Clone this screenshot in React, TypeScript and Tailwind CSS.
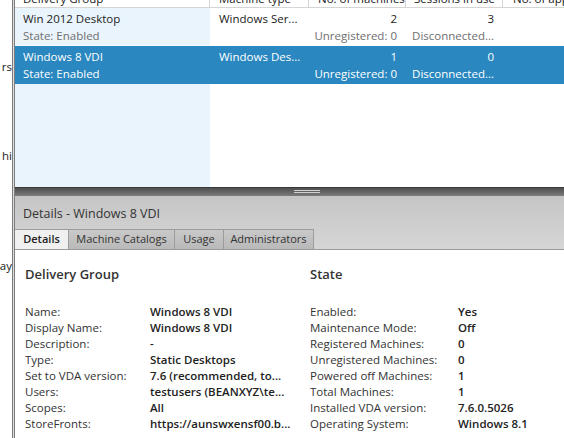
const rows = [
  {
    name: "Win 2012 Desktop",
    state: "State: Enabled",
    type: "Windows Ser...",
    machines: "2",
    unreg: "Unregistered: 0",
    sessions: "3",
    disc: "Disconnected...",
    selected: false,
  },
  {
    name: "Windows 8 VDI",
    state: "State: Enabled",
    type: "Windows Des...",
    machines: "1",
    unreg: "Unregistered: 0",
    sessions: "0",
    disc: "Disconnected...",
    selected: true,
  },
];

const groupInfo = [
  ["Name:", "Windows 8 VDI"],
  ["Display Name:", "Windows 8 VDI"],
  ["Description:", "-"],
  ["Type:", "Static Desktops"],
  ["Set to VDA version:", "7.6 (recommended, to..."],
  ["Users:", "testusers (BEANXYZ\\te..."],
  ["Scopes:", "All"],
  ["StoreFronts:", "https://aunswxensf00.b..."],
];

const stateInfo = [
  ["Enabled:", "Yes"],
  ["Maintenance Mode:", "Off"],
  ["Registered Machines:", "0"],
  ["Unregistered Machines:", "0"],
  ["Powered off Machines:", "1"],
  ["Total Machines:", "1"],
  ["Installed VDA version:", "7.6.0.5026"],
  ["Operating System:", "Windows 8.1"],
];

const tabs = ["Details", "Machine Catalogs", "Usage", "Administrators"];
const tabWidths = ["w-[54px]", "w-[106px]", "w-[49px]", "w-[90px]"];

export default function App() {
  return (
    <div
      className="w-[564px] h-[438px] flex overflow-hidden bg-white text-[11.5px] text-[#333]"
      style={{ fontFamily: '"Segoe UI", "Open Sans", "Noto Sans", sans-serif' }}
    >
      {/* edge of the navigation tree on the left */}
      <div className="w-[12px] flex flex-col items-end text-[#222] leading-[17px]">
        <span className="mt-[58px]">rs</span>
        <span className="mt-[72px]">hi</span>
        <span className="mt-[93px]">ay</span>
      </div>
      <div className="w-[3px] border-l border-[#7d7d7d] bg-[#dcdcdc] border-r" />

      <div className="flex-1 flex flex-col min-w-0">
        {/* grid */}
        <div className="h-[187px] flex flex-col overflow-hidden">
          <div className="h-[8px] flex overflow-hidden border-b border-[#d5d5d5] bg-white text-[#222]">
            <div className="w-[195px] shrink-0 border-r border-[#d5d5d5] pl-[8px] -mt-[10px] leading-[18px] flex justify-between pr-[8px]">
              <span>Delivery Group</span>
              <span className="text-[#888]">^</span>
            </div>
            <div className="w-[99px] shrink-0 border-r border-[#d5d5d5] pl-[9px] -mt-[10px] leading-[18px] whitespace-nowrap overflow-hidden">
              Machine type
            </div>
            <div className="w-[97px] shrink-0 border-r border-[#d5d5d5] pl-[9px] -mt-[10px] leading-[18px] whitespace-nowrap overflow-hidden">
              No. of machines
            </div>
            <div className="w-[97px] shrink-0 border-r border-[#d5d5d5] pl-[8px] -mt-[10px] leading-[18px] whitespace-nowrap overflow-hidden">
              Sessions in use
            </div>
            <div className="flex-1 pl-[10px] -mt-[10px] leading-[18px] whitespace-nowrap overflow-hidden">
              No. of applications
            </div>
          </div>

          {rows.map((r) => (
            <div
              key={r.name}
              className={`h-[38px] flex shrink-0 ${
                r.selected ? "bg-[#2a87c0] text-white" : "bg-white text-[#222]"
              }`}
            >
              <div
                className={`w-[195px] shrink-0 pl-[8px] pt-[2px] leading-[17px] ${
                  r.selected ? "" : "bg-[#eaf4fd] border-b border-[#f6fbff]"
                }`}
              >
                <div>{r.name}</div>
                <div className={r.selected ? "text-white" : "text-[#6e6e6e]"}>{r.state}</div>
              </div>
              <div className="w-[99px] shrink-0 pl-[9px] pt-[2px] leading-[17px] whitespace-nowrap">
                {r.type}
              </div>
              <div className="w-[97px] shrink-0 pr-[9px] pt-[2px] leading-[17px] text-right whitespace-nowrap">
                <div>{r.machines}</div>
                <div className={r.selected ? "text-white" : "text-[#6e6e6e]"}>{r.unreg}</div>
              </div>
              <div className="w-[97px] shrink-0 pr-[9px] pt-[2px] leading-[17px] text-right whitespace-nowrap">
                <div>{r.sessions}</div>
                <div className={r.selected ? "text-white" : "text-[#6e6e6e]"}>{r.disc}</div>
              </div>
              <div className="flex-1" />
            </div>
          ))}
          <div className="flex-1 flex">
            <div className="w-[195px] bg-[#eaf4fd]" />
            <div className="flex-1 bg-white" />
          </div>
        </div>

        {/* splitter */}
        <div className="h-[9px] border-t border-[#3a3a3a] bg-gradient-to-b from-[#4f4f4f] to-[#7c7c7c] flex justify-center">
          <div className="ml-[34px] mt-[2px] w-[26px] flex flex-col gap-[1px]">
            <div className="h-[1px] bg-[#d0d0d0]" />
            <div className="h-[1px] bg-[#d0d0d0]" />
          </div>
        </div>

        {/* details */}
        <div className="bg-gradient-to-b from-[#c5c5c5] to-[#d6d6d6] border-b border-[#9a9a9a]">
          <div className="h-[33px] pl-[8px] pt-[9px] leading-[18px] text-[12.5px] text-[#333]">
            Details - Windows 8 VDI
          </div>
          <div className="flex h-[20px] text-[11px]">
            {tabs.map((t, i) => (
              <div
                key={t}
                className={`${tabWidths[i]} shrink-0 h-[20px] flex items-center justify-center border-t border-r border-[#9c9c9c] whitespace-nowrap ${
                  i === 0
                    ? "bg-[#f0f0f0] font-semibold text-[#222]"
                    : "bg-gradient-to-b from-[#c9c9c9] to-[#b9b9b9] text-[#333]"
                }`}
              >
                {t}
              </div>
            ))}
          </div>
        </div>

        <div className="flex-1 bg-white pt-[15px]">
          <div className="flex">
            <div className="w-[295px] pl-[10px]">
              <div className="text-[13px] font-semibold text-[#333] leading-[18px]">Delivery Group</div>
              <div className="mt-[21px] leading-[16px]">
                {groupInfo.map(([k, v]) => (
                  <div key={k} className="flex whitespace-nowrap">
                    <div className="w-[125px] shrink-0">{k}</div>
                    <div className="font-semibold text-[#222]">{v}</div>
                  </div>
                ))}
              </div>
            </div>
            <div className="flex-1">
              <div className="text-[13px] font-semibold text-[#333] leading-[18px]">State</div>
              <div className="mt-[21px] leading-[16px]">
                {stateInfo.map(([k, v]) => (
                  <div key={k} className="flex whitespace-nowrap">
                    <div className="w-[148px] shrink-0">{k}</div>
                    <div className="font-semibold text-[#222]">{v}</div>
                  </div>
                ))}
              </div>
            </div>
          </div>
        </div>
      </div>
    </div>
  );
}
